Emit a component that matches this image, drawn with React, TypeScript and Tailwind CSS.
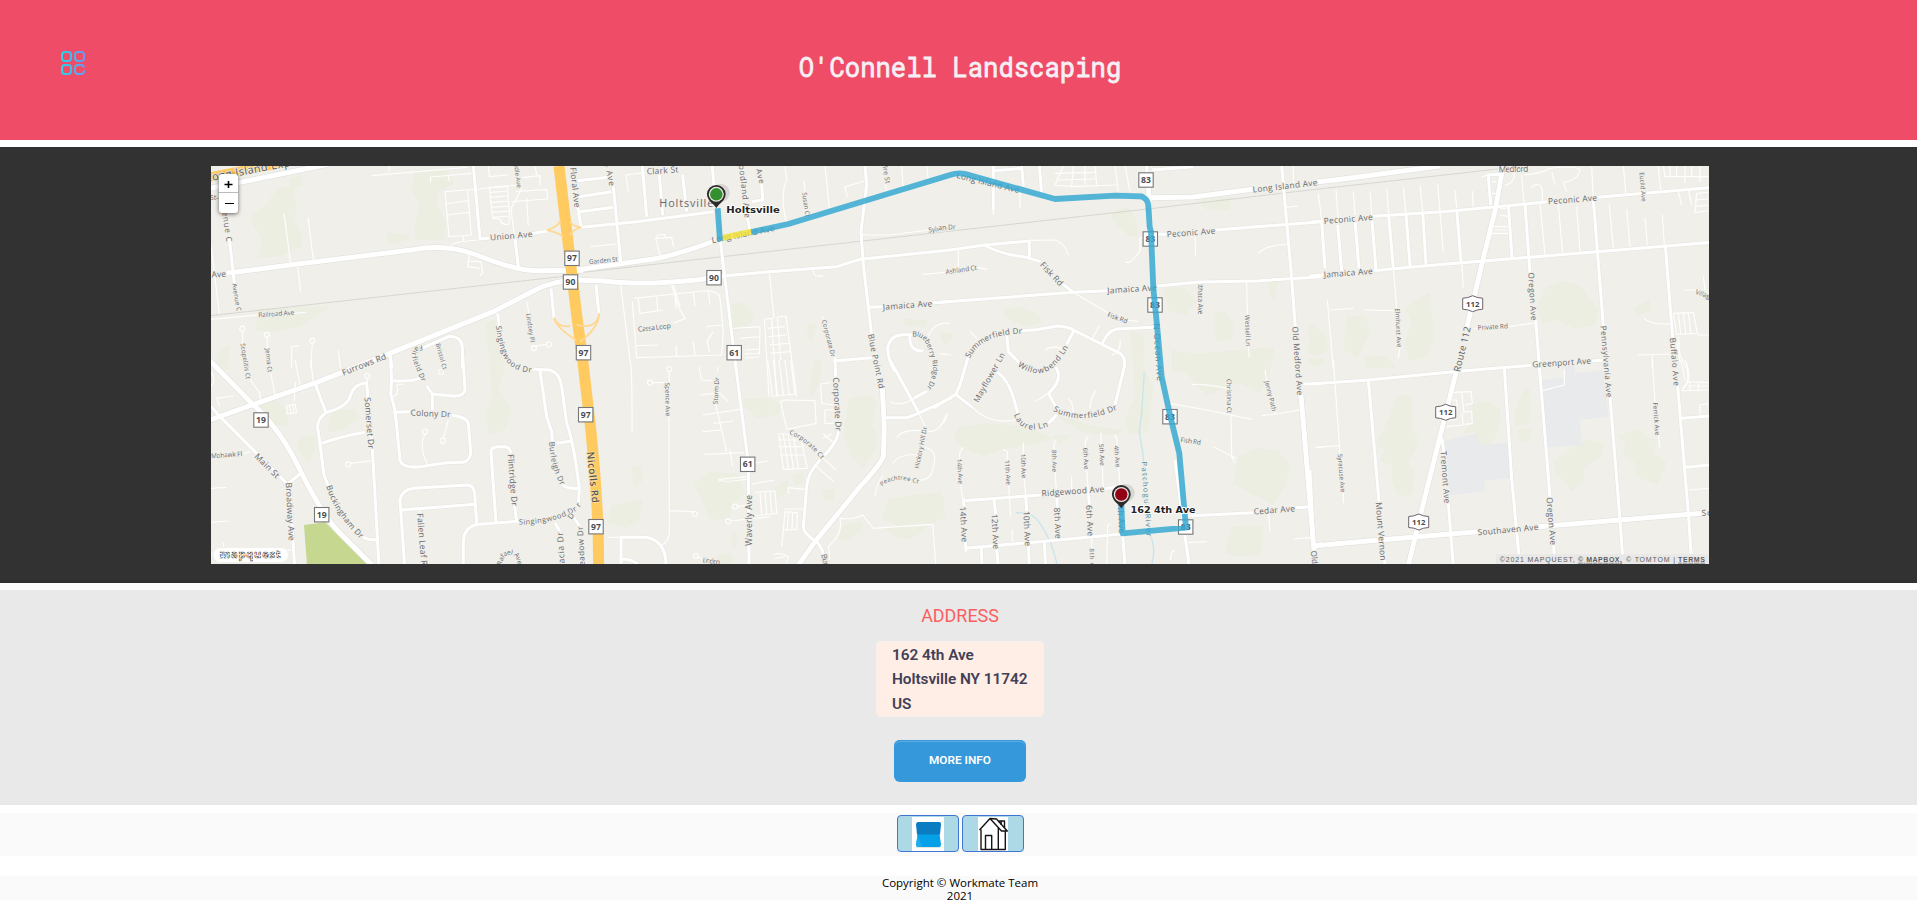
import React from "react";

type Line = [number, number, number, number, string, number?, string?];
type Curve = [string, string, number?];
interface Tile {
  x: number;
  y: number;
  woods?: string[];
  lots?: string[];
  major?: string[];
  mid?: string[];
  minor?: string[];
  dots?: [number, number][];
  labels?: Line[];
  curves?: Curve[];
}

// Every tile is drawn on a grid of three units per pixel.
const tiles: Tile[] = [
  {
    x: 200,
    y: 155,
    woods: [
      "M205 150 Q235 90 275 100 L285 140 L280 200 Q310 240 300 275 L235 300 L180 305 Q200 240 165 215 L160 180Z",
      "M645 50 L740 45 L755 85 L710 110 L705 150 L735 200 L725 250 L650 250 L650 200 L665 150 L640 110Z",
      "M565 238 L625 242 Q620 262 568 262Z",
      "M180 465 L385 458 L300 510 L210 530 L170 520Z",
      "M60 585 L85 575 L80 640 L50 640Z",
      "M860 505 L885 500 L890 560 L910 640 L890 700 L930 760 L915 820 L870 835 L860 780 L880 720 L870 600Z",
      "M270 75 L300 65 L305 90 L280 95Z",
    ],
    major: [
      "M0 106 L130 80 L385 28",
      "M78 355 L270 330 L640 284 Q740 265 830 300 Q950 348 1010 347 L1150 346",
      "M1140 375 Q1060 375 1000 408 L880 470 L575 593 L350 682 L150 752 L30 795",
    ],
    mid: [
      "M820 33 L840 252 L870 249",
      "M995 236 L1045 227",
      "M945 250 L955 335",
      "M88 250 L103 385",
      "M1053 400 L1062 490",
      "M893 475 L898 515",
      "M570 600 L577 640",
      "M665 580 L745 545 Q785 540 787 580 L787 640",
    ],
    minor: [
      "M252 175 L272 325 M324 187 L340 315 M293 335 L302 410 M33 270 L58 475",
      "M33 493 L175 480 M283 475 L318 472 M127 530 L128 565 M201 547 L203 580 M337 565 L332 640 M415 587 L422 640",
      "M515 62 L800 37 M568 50 V33 M692 82 L692 66 L815 55 M745 63 L748 78",
      "M735 110 L840 102 L868 98 M735 110 L747 245 L814 240 L803 108 M735 147 L805 137 M740 180 L808 172",
      "M790 242 V258 M752 272 Q760 260 835 255",
      "M868 98 L878 190 L900 192 Q905 212 925 208 L930 190 L922 95 Z M870 112 L925 108 M872 127 L925 123 M874 142 L926 138 M876 157 L927 153 M878 172 L928 168 M880 187 L929 183",
      "M865 33 L868 65 L925 60 M870 98 L950 90 M945 110 L1040 103 L1043 132 L935 140 M980 130 L985 212 M965 100 L950 130 L933 160 L943 245",
      "M965 68 L1020 62 L1020 92 M1005 33 L1010 60 M808 300 L803 335 L840 340 M805 318 L843 320 L848 355 L838 362 M980 440 L987 475",
      "M272 575 L297 572 M275 575 L275 640 M995 575 L1040 568",
    ],
    dots: [[127, 521], [201, 539], [337, 557], [1002, 579], [1047, 568]],
    labels: [
      [36, 66, 270, 22, "ong Island Exp", 31, "#57534a"],
      [30, 128, 55, 128, "St-", 21],
      [73, 155, 88, 260, "venue C", 23],
      [35, 359, 78, 356, "Ave", 24],
      [103, 385, 117, 468, "Avenue C", 18],
      [175, 480, 283, 472, "Railroad Ave", 19],
      [128, 565, 145, 672, "Scopelitis Ct", 18],
      [203, 580, 210, 652, "Jenna Ct", 18],
      [427, 654, 557, 603, "Furrows Rd", 24],
      [713, 565, 735, 643, "Bristol Ct", 17],
      [985, 475, 998, 562, "Lindsey Pl", 18],
      [947, 15, 958, 98, "oodle Ave", 18],
      [870, 248, 997, 237, "Union Ave", 24],
    ],
    curves: [
      ["M668 578 Q630 580 650 625 L690 720", "Fairfield Dr", 21],
      ["M896 512 Q900 560 920 605 Q945 650 1020 644", "Singingwood Dr", 23],
    ],
  },
  {
    x: 570,
    y: 155,
    woods: [
      "M490 450 Q530 440 548 480 Q545 510 490 528 Z",
      "M1005 495 L1068 500 L1060 512 L1010 508Z",
      "M720 510 L735 515 L725 555 L715 540Z",
      "M735 615 L752 625 L745 680 L722 720Z",
    ],
    major: [
      "M20 345 L150 326 L250 312 Q320 300 450 252",
      "M20 375 L100 378 Q220 392 380 375 L460 363",
    ],
    mid: [
      "M427 33 L432 95 M450 250 L493 600 L535 925 L537 1230",
      "M885 33 L890 90 L873 230 L880 330 L905 540",
      "M468 362 L600 350 L800 335 L870 313 L1140 285 L1245 270 L1378 258",
      "M35 217 L200 200 L430 170",
      "M130 95 L152 320",
      "M22 150 L33 215 M22 77 L115 67 M25 125 L125 110 M30 170 L130 157",
      "M217 33 L230 185 M268 60 L278 180 M338 60 L350 170",
      "M575 85 L578 135 L545 140 M530 180 L540 225 M78 390 L87 478",
      "M900 457 L938 455 M1090 443 L1140 440",
      "M1030 540 Q960 530 953 580 Q955 620 975 650 M1020 540 Q1015 590 1060 588",
      "M790 618 L905 608",
    ],
    minor: [
      "M175 110 L168 60 L230 52 M62 275 L140 267 M270 300 L257 250 L305 247 L310 275 M262 250 L262 240 L285 238 L285 248",
      "M190 430 L400 408 Q445 405 450 430 L460 530 L455 600 L200 608 L187 440 M205 430 L210 475 L280 465 M260 425 L263 470 M315 420 L318 460 M370 412 L375 455 M415 410 L420 450",
      "M305 390 L325 455 L345 490 L310 505 M310 390 L330 455 M200 572 L265 570 M320 605 L318 570 M375 600 L370 560 M418 590 L412 560 M410 515 L455 510 M430 530 L410 560",
      "M152 390 L180 615 M645 35 L650 75 Q630 120 648 200 M765 33 L778 160 M702 78 L705 110 M822 97 L883 78 M825 97 L832 125",
      "M945 85 L950 110 M995 33 L1000 100 M1070 33 L1075 75 M598 355 L612 490 M730 345 Q728 370 760 362",
      "M583 492 L605 490 L620 725 M583 492 L597 725 M605 490 L608 520 M622 486 L648 484 L680 725 M622 486 L632 615 M592 520 L645 515 M595 545 L650 540 M598 570 L655 565 M600 595 L660 590",
      "M490 520 L570 515 L568 600 M510 550 L570 545 M875 240 L960 240 L1075 225 M1058 358 L1125 352",
      "M525 585 L570 582 M525 597 L570 594 M525 609 L567 606",
      "M755 485 L762 495 M1140 505 Q1090 500 1075 545",
    ],
    labels: [
      [9, 37, 22, 157, "Floral Ave", 24],
      [230, 50, 325, 43, "Clark St", 24],
      [113, 20, 126, 92, "n Ave", 23],
      [515, 30, 533, 188, "oodland Ave", 23],
      [566, 42, 576, 85, "Ave", 22],
      [703, 112, 713, 185, "Susan Ct", 18],
      [268, 146, 430, 146, "Holtsville", 31],
      [425, 256, 613, 219, "Long Island Ave", 24],
      [57, 321, 143, 312, "Garden St", 19],
      [204, 523, 302, 512, "Cassa Loop", 20],
      [762, 495, 790, 605, "Corporate Dr", 18],
      [938, 456, 1087, 445, "Jamaica Ave", 24],
      [902, 537, 935, 700, "Blue Point Rd", 23],
      [1075, 225, 1158, 215, "Sylvan Dr", 20],
      [945, 33, 954, 85, "Ire St", 19],
    ],
    curves: [["M1027 538 Q1070 530 1085 590 Q1115 660 1064 718", "Blueberry Ridge Dr", 21]],
  },
  {
    x: 200,
    y: 360,
    woods: [
      "M190 130 L225 120 L262 160 L258 195 L215 190 L180 150Z",
      "M400 155 L460 150 L468 175 L420 210 L385 212Z",
      "M320 230 L345 228 L340 270 L325 305 L300 270 L298 245Z",
    ],
    major: ["M10 -18 L155 130 Q240 205 300 330 Q370 470 420 520 L520 620"],
    mid: [
      "M10 115 L75 185 L265 375",
      "M265 370 L300 342 M268 375 L284 620",
      "M345 70 L378 158 Q440 140 450 110 Q460 72 500 68 L517 265 L537 620",
      "M378 158 Q345 180 355 215 L372 345 L385 378 M365 250 Q440 225 495 217 M487 528 Q500 542 530 539",
      "M570 -20 L575 60 L572 100 L585 150 L600 300 Q605 325 660 320 L740 308 L790 307 Q812 300 812 275 L805 190 Q800 172 755 165 M580 157 L630 155",
      "M575 62 Q640 67 665 52 M787 -35 L795 90 Q790 112 750 107 L697 102 L680 78 M697 102 V150",
      "M614 620 L600 420 Q605 390 640 385 L800 375 Q822 375 824 400 L830 490 M605 450 L825 433",
      "M955 484 L835 493 Q790 500 790 550 V620 M888 488 L873 275 Q873 262 890 260 L915 260 Q930 262 933 280 M944 438 L950 485",
      "M1000 28 L1050 30 Q1080 40 1085 80 L1100 190 Q1120 240 1138 385 L1135 435 M1020 32 L1040 170 L1055 215 L1057 243 M1070 250 L1115 243 M1088 375 Q1105 388 1138 385 M1065 488 L1080 515 M1120 470 L1140 500",
    ],
    minor: [
      "M675 222 Q655 260 682 312 M745 180 L730 235 M452 310 L515 302 M33 385 L80 382 M33 487 L85 483 M502 55 V68 M660 450 V465",
      "M150 58 L180 100 V118 M212 38 L225 105 M287 65 L282 125 M260 138 L285 132 L290 158 L262 162Z M268 135 L272 160 M278 134 L282 160 M285 0 L300 75 M332 0 L340 68",
      "M33 80 Q50 60 33 35 M48 115 L100 108 M60 140 L50 118 M70 548 V560 M180 578 L275 570 M33 575 V590 M580 110 Q600 100 590 75 L612 72",
      "M725 20 L735 5 M127 280 L150 276",
    ],
    dots: [[502, 48], [675, 215], [728, 242], [445, 313], [723, 36]],
    labels: [
      [632, 158, 752, 163, "Colony Dr", 24],
      [502, 112, 514, 266, "Somerset Dr", 24],
      [168, 285, 235, 350, "Main St", 24],
      [266, 368, 275, 542, "Broadway Ave", 24],
      [33, 288, 127, 281, "Mohawk Pl", 19],
      [932, 283, 944, 438, "Flintridge Dr", 24],
      [660, 460, 673, 616, "Fallen Leaf R", 24],
      [1086, 640, 1080, 517, "acacia Dr", 24],
    ],
    curves: [
      ["M387 376 Q410 460 497 540", "Buckingham Dr", 24],
      ["M1055 245 Q1060 330 1100 390", "Burleigh Dr", 23],
      ["M957 486 Q1080 485 1152 426", "Singingwood Dr", 22],
      ["M898 615 Q905 575 930 577 Q960 577 960 620", "Rafael Ave", 20],
    ],
  },
  {
    x: 570,
    y: 360,
    woods: [
      "M525 120 L600 118 Q640 140 620 160 L560 170 L540 145 L520 140Z",
      "M375 375 L420 340 L500 345 L520 400 L480 440 L475 470 L425 475 L400 420Z",
      "M840 120 Q890 100 915 125 L900 200 Q930 240 905 280 L880 320 L845 280 L825 220Z",
      "M130 440 L215 420 L205 480 L170 500 L115 485Z",
      "M190 325 L210 320 L215 360 L195 375Z",
      "M960 420 L1060 405 L1110 400 L1122 470 L1090 485 L990 495 L940 475Z",
      "M820 500 L870 488 L870 510 L830 540 L812 535Z M950 505 L1070 500 L1020 535 L980 525Z",
      "M615 390 L650 365 L655 390 L620 410Z M672 350 L695 338 L700 360 L680 370Z M440 590 L480 583 L488 605 L450 612Z M485 530 L498 525 L495 560Z M756 590 L780 585 V612 H760Z",
      "M760 395 L790 390 L788 415 L765 420Z",
    ],
    major: ["M937 85 L943 200 L940 290 Q930 315 870 380 L735 545 L680 622"],
    mid: [
      "M795 -10 L797 52 M805 213 Q805 245 750 300 Q712 340 710 380 L700 500 Q700 520 740 545 Q758 565 760 585",
      "M960 0 L1045 155 M948 173 L1010 173 Q1040 165 1145 113 M1030 115 L1072 93",
      "M153 620 V532 L230 532 Q290 545 288 620 M153 597 Q190 597 205 615",
    ],
    minor: [
      "M297 170 L298 520 Q295 545 275 555 M115 532 h40 M298 452 L368 455 M247 68 L290 68 M298 33 V68 M180 0 Q187 20 186 218",
      "M1045 155 L1065 200 M387 20 L395 60 L425 62 M443 35 V20 M445 95 L475 125 M390 105 L435 100 M398 165 L510 148 M430 190 L492 183 M398 215 L455 210 M403 283 L520 278 M437 132 L470 275 M480 270 L488 320",
      "M593 0 L607 108 L675 103 L662 0 M610 0 L622 105 M627 0 L640 105 M645 0 L657 103 M632 125 L645 120 L735 122 L738 190 L650 208 Z",
      "M627 222 L690 222 L712 325 L640 328 Z M640 222 L655 325 M655 222 L670 325 M670 222 L685 325 M625 240 L695 240 M625 260 L700 260 M630 285 L705 285",
      "M752 72 L780 68 M752 75 L755 130 L790 135 M765 150 L795 148 M765 150 L765 190 L790 190 M735 315 L790 365 M760 295 L800 332 M545 310 L595 303 M545 372 L613 360 M445 358 L535 350 M445 358 Q450 370 535 357",
      "M555 397 L615 393 L620 460 L558 467 M570 397 L575 465 M585 395 L590 463 M600 394 L605 461 M502 440 L530 435 M482 483 L600 470 M652 383 L705 388 M655 385 V400 M645 455 L682 458 L680 508 L640 510 Z M655 456 L652 508 M668 456 L666 508 M640 510 L635 560",
      "M610 585 Q630 575 655 590 L650 610 M615 595 L645 590 M380 590 L400 598 M915 407 Q920 370 940 345 M980 232 Q1000 205 1062 213 Q1110 225 1130 160 M968 310 Q990 280 1040 285 M1065 262 Q1105 270 1090 320 Q1085 365 1040 360 M960 125 Q990 140 1030 118",
      "M780 600 L775 560 Q820 520 810 475 Q850 480 878 465 L910 505 L1088 493 L1097 610",
      "M642 447 L700 447 M760 222 L788 245 M758 235 L785 222",
    ],
    dots: [[298, 27], [240, 68], [375, 462], [495, 440], [475, 484], [378, 588]],
    labels: [
      [292, 68, 294, 169, "Spence Ave", 18],
      [436, 132, 441, 52, "Storm Dr", 18],
      [538, 557, 538, 405, "Waverly Ave", 24],
      [798, 52, 806, 213, "Corporate Dr", 24],
      [1040, 325, 1065, 200, "Hickory Hill Dr", 18],
      [398, 600, 450, 606, "Linden", 20],
      [762, 582, 769, 616, "Bur", 22],
      [37, 640, 30, 500, "Meadow Dr", 23],
      [-2, 475, 28, 430, "Dr", 22],
    ],
    curves: [
      ["M660 215 Q720 240 768 306", "Corporate Ct", 19],
      ["M933 375 Q970 335 1055 368", "Peachtree Ct", 18],
    ],
  },
  {
    x: 940,
    y: 155,
    woods: [
      "M520 175 L560 160 Q590 185 590 240 L570 240 L520 195Z",
      "M780 135 L870 130 L865 160 L800 160Z",
      "M190 465 L240 458 Q300 480 300 500 L250 510 L200 485Z",
      "M675 405 L730 400 L765 440 L735 475 L690 465Z",
      "M825 480 L850 470 L880 510 L870 550 L830 555Z",
      "M700 590 L760 600 L905 590 L1000 580 L985 650 L960 710 L900 680 L800 715 L740 650 L700 640Z",
      "M575 535 L610 540 L605 620 L635 700 L620 830 L570 835 L560 790 L590 720Z M985 380 L1010 378 L1000 435Z M0 535 L38 540 L15 565Z",
    ],
    major: ["M625 85 L628 160", "M540 120 L640 128 L760 126 L938 103", "M1132 80 L1180 76 L1500 33"],
    mid: [
      "M620 33 L622 90",
      "M-20 443 L400 412 L502 407 M652 393 L780 381 L950 378 L1145 365",
      "M1025 33 L1055 370 L1066 517",
      "M655 238 H680 M828 225 L1145 200",
      "M130 270 Q190 300 250 305 L302 320 M365 385 L405 415 M268 258 V305",
      "M245 527 L290 524 L350 513 Q385 515 400 525 L540 595 Q557 605 553 635 L525 750 M485 570 Q500 530 530 522 L640 517 M400 530 L380 568",
      "M200 535 L205 590 L245 630 M85 605 L60 690 L47 718 L-20 760 M47 718 L98 758",
      "M160 47 L245 40 M245 33 L250 95 M298 33 L305 115 M635 45 L760 35 M160 165 V33",
    ],
    minor: [
      "M55 280 V335 M268 256 L345 255 Q375 265 385 300 M115 337 L142 343 M240 100 V160 M160 95 V180",
      "M345 55 L470 52 M350 75 L465 72 M370 33 L345 90 L400 95 L530 90 M400 33 L395 95 M435 33 V90 M465 33 L470 90 M525 33 L535 110 M555 33 L570 110",
      "M555 322 L570 322 L600 290 V250 L630 240 M765 238 L767 305 M955 295 Q980 270 1040 268 M920 380 L922 480 M925 573 L928 608 M405 415 L503 473 M562 495 L595 500 M780 380 V388 M1040 157 L1075 153",
      "M455 555 L478 512 M90 530 L120 560 M540 555 Q545 590 515 600 M315 585 Q345 565 380 590 M0 595 L33 600 M1060 33 V85",
    ],
    labels: [
      [50, 60, 238, 106, "Long Island Ave", 24],
      [-5, 218, 47, 215, "an Dr", 19],
      [17, 351, 110, 338, "Ashland Ct", 19],
      [305, 325, 365, 388, "Fisk Rd", 24],
      [503, 478, 562, 499, "Fisk Rd", 19],
      [502, 407, 650, 397, "Jamaica Ave", 24],
      [680, 238, 826, 227, "Peconic Ave", 24],
      [938, 104, 1132, 82, "Long Island Ave", 24],
      [780, 388, 780, 478, "Ithaca Ave", 18],
      [922, 480, 925, 573, "Wessell Ln", 18],
      [649, 505, 660, 677, "N Ocean Ave", 24],
      [1065, 515, 1080, 720, "Old Medford Ave", 23],
      [107, 740, 188, 595, "Mayflower Ln", 23],
    ],
    curves: [
      ["M82 607 Q120 525 258 528", "Summerfield Dr", 24],
      ["M237 625 Q300 670 345 620 Q370 590 393 545", "Willowbend Ln", 24],
    ],
  },
  {
    x: 940,
    y: 360,
    woods: [
      "M60 205 L130 195 L240 200 L330 235 L270 250 L180 265 L130 285 L60 255 L45 230Z",
      "M360 170 L430 195 L540 215 L500 222 L420 210Z",
      "M900 290 L955 268 L1010 275 L1045 310 L1035 370 L1000 430 L940 400 L885 370Z",
      "M880 505 L965 500 L960 580 L890 585 L860 575Z",
      "M340 230 L385 228 L360 250Z M0 400 L12 430 L0 445Z",
    ],
    major: ["M1083 105 L1122 572"],
    mid: [
      "M160 30 Q205 50 225 130 L235 165 M325 190 L350 165 M325 100 L350 145 M325 100 Q360 70 355 40 L348 20",
      "M70 422 L305 405 M493 387 L525 380 M70 415 L72 440",
      "M75 565 L300 545 L545 522 M76 545 L78 575",
      "M740 468 L941 458 M1065 443 L1115 440 M1090 72 H1145",
      "M705 300 L728 480 L748 620 M548 520 L555 620 M162 420 L167 462 M170 566 L175 620 M124 560 L126 620 M257 405 L260 453 M265 556 L268 620 M313 545 L317 620 M350 400 L352 443 M445 395 L448 435 M1122 565 L1145 550",
    ],
    minor: [
      "M98 143 Q150 195 230 180 M285 125 L325 100 M60 297 Q55 275 70 262 M62 372 L68 420 M190 268 L202 275 V300 M206 375 L212 470 M250 282 L250 248 M252 355 L257 405 M343 270 Q338 250 350 238 M345 335 L350 400 M437 263 Q433 240 445 230 M440 328 L445 395 M483 252 V218 M487 317 L490 385 M530 257 Q535 235 523 225 M536 322 L540 375 M395 350 V390",
      "M385 115 Q400 130 400 160 M450 145 Q450 120 467 92 M0 195 Q15 190 22 160 M690 130 L800 150 L935 178 M755 75 Q775 68 865 85 M873 165 L875 290 L885 310 M820 260 L888 295 M975 30 L980 63 M965 167 L1010 162 L1080 150 M1005 155 V162 M985 455 L990 513 M745 548 L800 545 M1062 537 L1115 532 M1128 262 H1145 M500 615 L503 495 L512 492 M692 600 Q690 575 705 572 M217 510 V545",
      "M455 530 V565 M460 610 V620",
    ],
    labels: [
      [305, 400, 493, 387, "Ridgewood Ave", 24],
      [58, 297, 62, 372, "14th Ave", 18],
      [201, 300, 206, 375, "11th Ave", 18],
      [249, 282, 252, 355, "10th Ave", 18],
      [342, 270, 344, 336, "8th Ave", 18],
      [436, 263, 439, 328, "6th Ave", 18],
      [484, 252, 487, 317, "5th Ave", 18],
      [529, 257, 534, 322, "4th Ave", 18],
      [68, 440, 74, 546, "14th Ave", 24],
      [163, 462, 169, 567, "12th Ave", 24],
      [259, 453, 264, 558, "10th Ave", 24],
      [351, 443, 355, 536, "8th Ave", 24],
      [447, 435, 452, 528, "6th Ave", 24],
      [541, 425, 546, 520, "4th Ave", 24],
      [455, 565, 458, 620, "8th A", 18],
      [867, 57, 868, 160, "Christina Ct", 18],
      [981, 63, 1003, 153, "Jenny Path", 18],
      [722, 239, 783, 248, "Fish Rd", 19],
      [941, 455, 1065, 445, "Cedar Ave", 24],
      [1121, 572, 1125, 612, "Old", 23],
      [612, 305, 628, 530, "Patchogue River", 21, "#4f8a9c"],
    ],
    curves: [
      ["M230 160 Q248 225 337 185", "Laurel Ln", 24],
      ["M343 145 Q425 192 540 135", "Summerfield Dr", 24],
    ],
  },
  {
    x: 1310,
    y: 155,
    woods: [
      "M710 400 L760 382 Q830 395 830 430 L862 465 L850 510 L790 515 L745 490 L700 500 L685 460Z",
      "M290 460 L355 420 L360 470 Q380 540 350 600 L300 615 L290 560 L310 500Z",
      "M115 485 L165 490 L175 540 L140 600 L105 580Z M0 510 Q45 530 50 580 L20 600 L0 590Z M975 460 L1015 440 L1020 460 L985 478Z M170 605 L230 610 L250 635 L170 635Z",
    ],
    major: ["M577 45 L557 160 L515 330 L470 520"],
    mid: [
      "M0 202 L40 198 M188 184 L400 170 L650 147 L712 140 M862 127 L1200 98",
      "M0 363 L40 359 M190 347 L340 333 L520 318 L862 290 L1200 262",
      "M35 200 L45 340 M83 210 L95 348 M135 200 L147 340 M186 195 L198 345 M236 180 L250 340 M288 178 L300 333 M338 170 L348 328 M440 162 L453 322",
      "M645 147 L660 355 M677 495 L687 620 M850 135 L880 512 M1066 272 L1088 548 M595 150 L606 308 M535 65 L542 150 M530 60 L578 58",
    ],
    minor: [
      "M25 115 L35 195 M78 105 L85 195 M130 110 L135 180 M180 108 L186 190 M230 100 L236 180 M280 97 L288 178 M330 90 L338 170 M383 87 L400 293 M435 105 L440 160 M487 108 L490 155 M250 340 L260 460 M455 320 L460 398 M52 435 L70 640 M60 465 L130 460 M162 465 L255 467 M270 575 L265 610",
      "M690 145 L705 300 M745 150 L758 295 M800 155 L810 290 M898 148 L910 280 M950 163 L960 275 M1005 188 L1012 270 M1057 180 L1063 270 M845 35 L850 130 M940 33 L947 115 M1045 33 L1052 105 M635 60 L642 147",
      "M515 65 L540 60 M545 80 L560 80 M545 115 L560 115 M550 215 L595 215 M545 235 L595 235 M555 225 L590 225 M570 180 L595 185 M570 160 L590 160 M600 35 Q625 60 600 85 L585 90 M665 100 Q670 85 690 90 L697 105 V145 M640 60 Q700 55 720 40 Q800 30 810 45 Q805 75 760 82 L770 110 M725 50 L735 90",
      "M1060 33 L1065 65 L1195 65 M1080 33 V65 M1100 33 V65 M1125 33 V85 M1145 33 V65 M1170 33 V80 M1160 115 L1195 112 M1155 135 L1195 132 M1155 155 L1195 150 M1160 115 L1155 172 L1195 168 M1105 110 L1115 150 M1135 105 L1145 150 M1180 365 L1185 400 L1180 410 M1125 405 L1160 405",
      "M1090 475 L1150 472 L1162 535 L1100 538Z M1105 475 L1112 536 M1120 475 L1127 536 M1135 474 L1143 536 M1002 490 Q1020 510 1085 507 M1162 540 H1200 M982 600 L1085 597 M1100 560 L1110 620 M490 522 L503 520 M595 515 L677 503 M1027 600 V640 M1105 545 L1110 600 L1130 640 Q1140 690 1120 700",
    ],
    labels: [
      [566, 43, 655, 41, "Medford", 24],
      [41, 198, 188, 186, "Peconic Ave", 24],
      [714, 139, 861, 128, "Peconic Ave", 24],
      [41, 359, 188, 348, "Jamaica Ave", 24],
      [262, 460, 268, 577, "Elmhurst Ave", 18],
      [503, 518, 594, 513, "Private Rd", 19],
      [663, 353, 672, 496, "Oregon Ave", 23],
      [440, 650, 473, 515, "Route 112", 27, "#5c5c60"],
      [880, 512, 898, 727, "Pennsylvania Ave", 23],
      [1088, 548, 1100, 692, "Buffalo Ave", 23],
      [667, 629, 843, 617, "Greenport Ave", 24],
      [995, 52, 1002, 140, "Euclid Ave", 18],
      [1157, 410, 1200, 425, "Villag", 19],
    ],
  },
  {
    x: 1310,
    y: 360,
    woods: [
      "M265 108 L300 110 L300 200 L320 240 L315 260 L290 310 L313 335 L300 400 L270 405 L250 365 L250 310 L213 300 L230 270 L203 250 L240 180Z",
      "M490 135 L530 125 L565 145 L568 190 L545 250 L505 255 L500 210 L465 215 L490 190Z",
      "M745 295 L830 240 L882 255 L870 290 L820 320 L815 365 L785 388 L745 340 L733 305Z",
      "M930 230 L985 210 L1005 235 L1035 240 L1025 280 L1065 310 L1040 370 L980 345 L985 310 L945 285 L950 250Z",
      "M640 100 L655 90 L655 190 L620 195 L620 150Z M630 210 L662 210 L655 240 L630 245Z M0 0 L40 0 L30 15 L0 10Z M165 0 L230 0 L200 25Z",
    ],
    lots: [
      "M693 62 L765 50 L765 20 L795 10 L795 40 L880 30 L895 170 L810 180 L815 255 L712 262Z",
      "M405 242 L500 220 L507 255 L593 248 L603 355 L523 362 L524 393 L420 405Z",
    ],
    major: [
      "M440 30 L405 170 L335 450 L293 625",
      "M15 557 L200 541 L430 521 L503 515 M685 500 L930 480 L1175 460",
    ],
    mid: [
      "M0 72 L175 60 L430 35 L665 16 M845 3 L880 0",
      "M0 330 L12 570",
      "M175 60 L207 425 M223 600 L226 620 M395 235 L402 275 M415 430 L430 620",
      "M583 25 L605 355 L630 620 M688 20 L720 412 M731 555 L734 620",
      "M900 110 L930 480 L940 620 M1103 78 L1135 460 L1146 620 M1115 175 L1200 168 M1128 322 L1200 315",
    ],
    minor: [
      "M70 0 L75 70 L90 280 M100 395 V430 M18 262 L88 257 M0 535 L12 530 M1027 0 L1035 128 M1045 225 L1049 262",
      "M697 92 L763 75 V30 M1135 390 L1200 385 M1115 92 L1200 90 M1130 65 L1200 68 M1135 78 L1200 78 M1140 65 V90 M1165 65 V92 M1170 165 V135 L1195 130 M1125 0 Q1140 30 1135 60 L1115 92 M1112 0 Q1120 30 1125 60",
      "M430 97 L483 95 L487 130 L465 135 M455 97 L462 160 M425 120 L440 120 L442 150 M465 155 L485 155 L487 190 L465 193 M410 200 L460 195 L455 160 M415 180 L440 178",
    ],
    labels: [
      [90, 282, 99, 397, "Syracuse Ave", 18],
      [400, 273, 412, 430, "Tremont Ave", 24],
      [206, 427, 220, 601, "Mount Vernon", 24],
      [503, 517, 685, 501, "Southaven Ave", 24],
      [718, 412, 730, 555, "Oregon Ave", 24],
      [1036, 128, 1042, 226, "Ferrick Ave", 18],
      [1175, 459, 1235, 456, "Sout", 24],
    ],
  },
];

const shields: [number, number, string][] = [
  [572, 258.3, "97"],
  [570.5, 282, "90"],
  [583.5, 352.7, "97"],
  [585.7, 414.7, "97"],
  [596, 526.7, "97"],
  [714, 277.7, "90"],
  [734.2, 352.7, "61"],
  [747.7, 464.3, "61"],
  [261, 420, "19"],
  [321.7, 514.7, "19"],
  [1146, 180, "83"],
  [1150.3, 239, "83"],
  [1155, 305, "83"],
  [1170, 416.7, "83"],
  [1185.7, 527, "83"],
];

const hexShields: [number, number][] = [
  [1472.7, 303.7],
  [1445.7, 412.3],
  [1418.7, 522],
];

const place = (t: Tile) => `translate(${t.x} ${t.y}) scale(${1 / 3})`;

function Roads({ casing }: { casing: boolean }) {
  const extra = casing ? 3 : 0;
  const color = casing ? "#dddddb" : "#ffffff";
  return (
    <g fill="none" stroke={color} strokeLinejoin="round">
      {tiles.map((t, i) => (
        <g key={i} transform={place(t)}>
          {!casing && (
            <g strokeWidth={3.6} strokeOpacity={0.9}>
              {t.minor?.map((d, k) => <path key={k} d={d} />)}
              {t.dots?.map(([x, y], k) => <circle key={k} cx={x} cy={y} r={7.5} />)}
            </g>
          )}
          <g strokeWidth={9 + extra} strokeOpacity={casing ? 0.6 : 1}>
            {t.mid?.map((d, k) => <path key={k} d={d} />)}
          </g>
          <g strokeWidth={15 + extra}>{t.major?.map((d, k) => <path key={k} d={d} />)}</g>
        </g>
      ))}
    </g>
  );
}

function StreetName({ item }: { item: Line }) {
  const [x1, y1, x2, y2, text, size = 24, color = "#68696d"] = item;
  const angle = (Math.atan2(y2 - y1, x2 - x1) * 180) / Math.PI;
  return (
    <text
      transform={`translate(${x1} ${y1}) rotate(${angle})`}
      dy="0.35em"
      fontSize={size * 1.05}
      fill={color}
      textLength={Math.hypot(x2 - x1, y2 - y1)}
    >
      {text}
    </text>
  );
}

function Labels() {
  return (
    <g
      fontFamily='"Open Sans", "Noto Sans", sans-serif'
      fontWeight={500}
      stroke="#f0efea"
      strokeWidth={5}
      strokeLinejoin="round"
      paintOrder="stroke"
    >
      {tiles.map((t, i) => (
        <g key={i} transform={place(t)}>
          {t.labels?.map((l, k) => <StreetName key={k} item={l} />)}
          {t.curves?.map(([d, text, size = 22], k) => (
            <g key={k}>
              <path id={`street-${i}-${k}`} d={d} fill="none" stroke="none" />
              <text fontSize={size} fill="#68696d" letterSpacing={1.2} dy="0.35em">
                <textPath href={`#street-${i}-${k}`}>{text}</textPath>
              </text>
            </g>
          ))}
        </g>
      ))}
    </g>
  );
}

function Pin({ x, y, color }: { x: number; y: number; color: string }) {
  return (
    <g transform={`translate(${x} ${y})`}>
      <circle cx={4.5} cy={-1.5} r={9} fill="#000" opacity={0.1} />
      <path d="M-9.4 0 A9.4 9.4 0 1 1 9.4 0 Q9 5.5 2.6 10.5 L0 13.8 L-2.6 10.5 Q-9 5.5 -9.4 0Z" fill="#2b2b2b" />
      <circle r={7.5} fill="#e9e9e6" />
      <circle r={6.2} fill={color} />
    </g>
  );
}

function RouteMap() {
  return (
    <svg viewBox="211 166 1498 398" className="block h-[398px] w-[1498px] bg-[#f0efea]">
      <g fill="#ebeee1">
        {tiles.map((t, i) => (
          <g key={i} transform={place(t)} stroke="#ebeee1" strokeWidth={8} strokeLinejoin="round">
            {t.woods?.map((d, k) => <path key={k} d={d} />)}
          </g>
        ))}
      </g>
      <g fill="#e8eaeb">
        {tiles.map((t, i) => (
          <g key={i} transform={place(t)}>{t.lots?.map((d, k) => <path key={k} d={d} />)}</g>
        ))}
      </g>
      <path d="M304 525 L325 522.3 L369 565 H307Z" fill="#c6d78f" />
      <g transform="translate(940 360) scale(0.3333)" fill="none" stroke="#c9e5ec" strokeWidth={4}>
        <path d="M613 38 L605 160 L598 215 L610 290 L618 420 L628 520 Q650 560 635 615 M228 458 Q280 455 300 490 Q335 540 352 615" />
      </g>
      <g transform="translate(200 155) scale(0.3333)" fill="none" stroke="#c6c6c3" strokeWidth={2.4} strokeDasharray="5 1.5">
        <path d="M33 482 L1110 362 L1140 353 L2220 232 L2860 160 L3330 105 L3895 42" />
      </g>
      <Roads casing />
      <Roads casing={false} />
      <g transform="translate(200 155) scale(0.3333)" fill="none" stroke="#ffcb60">
        <path d="M20 68 L255 22" strokeWidth={28} />
        <path d="M20 68 L255 22" strokeWidth={2} stroke="#e9b54c" />
      </g>
      <g transform="translate(570 155) scale(0.3333)" fill="none" stroke="#ffcb60">
        <path d="M-33 33 L-5 270 L20 480 L38 615 L62 820 Q86 1040 86 1240" strokeWidth={33} />
        <path
          d="M-70 226 Q-35 215 -28 195 M-70 226 Q-40 230 -20 245 M34 217 Q8 215 0 200 M34 217 Q10 222 0 240 M-48 488 Q-35 520 0 513 M-48 488 Q-40 520 18 555 M88 475 Q80 525 20 510 M88 475 Q85 520 30 560"
          strokeWidth={5.5}
          stroke="#ffd893"
        />
      </g>
      <Labels />
      <g transform="translate(570 360) scale(0.3333)">
        <g
          fontFamily='"Open Sans", sans-serif'
          fontWeight={600}
          stroke="#ffdf9c"
          strokeWidth={5}
          paintOrder="stroke"
        >
          <StreetName item={[61, 275, 77, 428, "Nicolls Rd", 28, "#55555a"]} />
        </g>
      </g>
      <g fontFamily='"Open Sans", sans-serif' fontWeight={700} fontSize={8.6} textAnchor="middle" fill="#4b4b4f">
        {shields.map(([x, y, n], i) => (
          <g key={i}>
            <rect x={x - 7.2} y={y - 7.2} width={14.4} height={14.4} fill="#fff" stroke="#77777a" strokeWidth={1.1} />
            <text x={x} y={y + 3.1}>{n}</text>
          </g>
        ))}
        {hexShields.map(([x, y], i) => (
          <g key={i} transform={`translate(${x} ${y})`}>
            <path
              d="M-10 -5.5 Q-5 -5.5 0 -8 Q5 -5.5 10 -5.5 V5.5 Q5 5.5 0 8 Q-5 5.5 -10 5.5Z"
              fill="#fff"
              stroke="#6d6470"
              strokeWidth={1}
            />
            <text y={2.9} fontSize={7.8}>112</text>
          </g>
        ))}
      </g>
      <g transform="translate(940 155) scale(0.3333)" fill="none" strokeWidth={17.5} strokeLinejoin="round" opacity={0.84}>
        <path d="M-660 250 L-562 229" stroke="#f2e23c" />
        <path
          d="M-667 160 L-660 258 M-566 231 L-455 207 L30 60 Q60 50 90 61 L345 132 L525 122 L605 124 Q623 132 625 150 L629 215 L633 230 L640 400 L650 500 L665 665 L690 780 L718 895 L738 1118 L548 1135 L544 1050"
          stroke="#35a8d2"
        />
      </g>
      <Pin x={716.3} y={194.3} color="#33902f" />
      <Pin x={1121.3} y={494.5} color="#930013" />
      <g
        fontFamily='"DejaVu Sans", Verdana, sans-serif'
        fontWeight={700}
        fontSize={9.4}
        fill="#242424"
        stroke="#fff"
        strokeWidth={2}
        strokeLinejoin="round"
        paintOrder="stroke"
      >
        <text x={726.3} y={213} textLength={53.5} lengthAdjust="spacingAndGlyphs">Holtsville</text>
        <text x={1130.5} y={513} textLength={65} lengthAdjust="spacingAndGlyphs">162 4th Ave</text>
      </g>
      <rect x={213.5} y={548} width={74.5} height={14} rx={7} fill="#fff" />
      <text
        x={219.5}
        y={557.5}
        textLength={61}
        fontFamily='"Open Sans", sans-serif'
        fontSize={11}
        fontWeight={700}
        fill="#fff"
        stroke="#222"
        strokeWidth={0.6}
        strokeDasharray="3 0.8"
      >
        mapquest
      </text>
      <rect x={1496} y={554.3} width={213} height={9.7} fill="#e8e8e7" />
      <g fontFamily='"Liberation Sans", Arial, sans-serif' fontSize={7} fill="#5c5c5f">
        <text x={1499.7} y={561.8} textLength={75}>©2021 MAPQUEST,</text>
        <text x={1578} y={561.8} textLength={44} textDecoration="underline" fontWeight={700}>© MAPBOX,</text>
        <text x={1626} y={561.8} textLength={49}>© TOMTOM |</text>
        <text x={1678} y={561.8} textLength={27} textDecoration="underline" fontWeight={700}>TERMS</text>
      </g>
    </svg>
  );
}

function GridIcon() {
  return (
    <svg viewBox="0 0 24 24" className="h-6 w-6" fill="none" stroke="url(#menu-tint)" strokeWidth={2}>
      <defs>
        <linearGradient id="menu-tint" gradientUnits="userSpaceOnUse" x1="0" y1="0" x2="24" y2="0">
          <stop offset="0" stopColor="#21d9ea" />
          <stop offset="1" stopColor="#6f95f0" />
        </linearGradient>
      </defs>
      <rect x="1" y="1" width="9" height="9" rx="3" />
      <rect x="14" y="1" width="9" height="9" rx="3" />
      <rect x="1" y="14" width="9" height="9" rx="3" />
      <path d="M23 16.6 Q22.6 14 20 14 H17 Q14 14 14 17 V20 Q14 23 17 23 H20 Q23 23 23 20 V19" />
    </svg>
  );
}

function MailIcon() {
  return (
    <svg viewBox="0 0 32 34" className="h-[34px] w-8 bg-white">
      <path d="M5 29.5 H28 L29 31 H4Z" fill="#e3e3e3" />
      <path d="M5.5 17 H27.5 L29 27.5 Q29 30 27 30 H6 Q4 30 4.2 27.5Z" fill="#05a0e8" />
      <path d="M5.5 17.5 L10 30 H6 Q4 30 4.2 27.5Z" fill="#1badec" />
      <path d="M6 5 H27 Q29.3 5 29 7.5 L28 17.5 H5 L4 7.5 Q4 5 6 5Z" fill="#0a7cc2" />
    </svg>
  );
}

function HouseIcon() {
  return (
    <svg
      viewBox="0 0 30 34"
      className="h-[34px] w-[30px] bg-white"
      fill="none"
      stroke="#151515"
      strokeWidth={1.4}
      strokeLinejoin="round"
    >
      <path d="M1.5 13 L12 1.5 L18.5 2 L29.3 14 H23.5 L12.2 1.8 M3 12.5 V32.5 H27.3 V14.5 M20.3 11 V32.5 M7.5 32.5 V18.5 H13.7 V32.5" />
      <path d="M21.5 5.8 V4 H26.5 V11 M23.2 4.5 V8" />
    </svg>
  );
}

export default function App() {
  return (
    <div className="flex h-[900px] flex-col overflow-hidden bg-white font-['Roboto',sans-serif]">
      <header className="grid h-[140px] shrink-0 grid-cols-[1fr_auto_1fr] bg-[#ef4c67] pl-[3px]">
        <button aria-label="Menu" className="ml-[58px] mt-[51px] h-6 w-6">
          <GridIcon />
        </button>
        <h1 className="mt-[52px] origin-center scale-y-[1.07] whitespace-pre font-['Roboto_Mono','Liberation_Mono',monospace] text-[25.6px] leading-8 text-[#f5f0f5] [-webkit-text-stroke:0.75px_#f5f0f5]">
          O'Connell Landscaping
        </h1>
      </header>

      <main className="mt-[7px] flex h-[436px] shrink-0 justify-center bg-[#323232] pt-[19px]">
        <div className="relative ml-[3px] h-[398px] w-[1498px] overflow-hidden">
          <RouteMap />
          <div className="absolute left-2 top-2 flex h-[39px] w-[19px] flex-col overflow-hidden rounded-[3px] bg-white shadow-[0_1px_4px_rgba(0,0,0,0.6)]">
            <button aria-label="Zoom in" className="flex h-[19px] items-center justify-center border-b border-[#bbb] pt-0.5">
              <svg viewBox="0 0 9 9" className="h-[9px] w-[9px]" stroke="#000" strokeWidth={1.6}>
                <path d="M0.5 4.5 H8.5 M4.5 1 V8" />
              </svg>
            </button>
            <button aria-label="Zoom out" className="flex h-5 items-center justify-center pl-0.5">
              <svg viewBox="0 0 9 9" className="h-[9px] w-[9px]" stroke="#000" strokeWidth={1.2}>
                <path d="M0 4.5 H9" />
              </svg>
            </button>
          </div>
        </div>
      </main>

      <section className="mt-[7px] flex h-[215px] shrink-0 flex-col items-center bg-[#e9e9e9] pl-[3px]">
        <h2 className="mt-[13px] text-[17.9px] leading-[26px] text-[#fa5f5f]">ADDRESS</h2>
        <address className="mt-3 h-[76px] w-[168px] whitespace-nowrap rounded-sm border border-[#f6f0ec] bg-[#ffeee6] pl-[15px] pt-px text-[15.4px] font-semibold not-italic leading-6 tracking-[-0.05px] text-[#434055]">
          <div>162 4th Ave</div>
          <div>Holtsville NY 11742</div>
          <div className="mt-px">US</div>
        </address>
        <button className="mt-[23px] h-[42px] w-[132px] rounded-md bg-[#3498db] text-[11.8px] font-semibold text-white shadow-[inset_0_1px_0_#3498db,inset_0_2px_0_#5dade2]">
          MORE INFO
        </button>
      </section>

      <nav className="mt-2 flex h-[43px] shrink-0 justify-center gap-[3px] bg-[#fafafa] pl-1 pt-0.5">
        <button aria-label="Messages" className="flex h-[37px] w-[62px] items-center justify-center rounded-[4px] border border-[#3f75d3] bg-[#add8e6]">
          <MailIcon />
        </button>
        <button aria-label="Home" className="flex h-[37px] w-[62px] items-center justify-center rounded-[4px] border border-[#3f75d3] bg-[#add8e6]">
          <HouseIcon />
        </button>
      </nav>

      <footer className="mt-5 h-6 shrink-0 bg-[#fafafa] pl-[3px] text-center font-['Trebuchet_MS','Open_Sans',sans-serif] text-[11.5px] leading-[13px] text-black">
        <div>Copyright © Workmate Team</div>
        <div>2021</div>
      </footer>
    </div>
  );
}
